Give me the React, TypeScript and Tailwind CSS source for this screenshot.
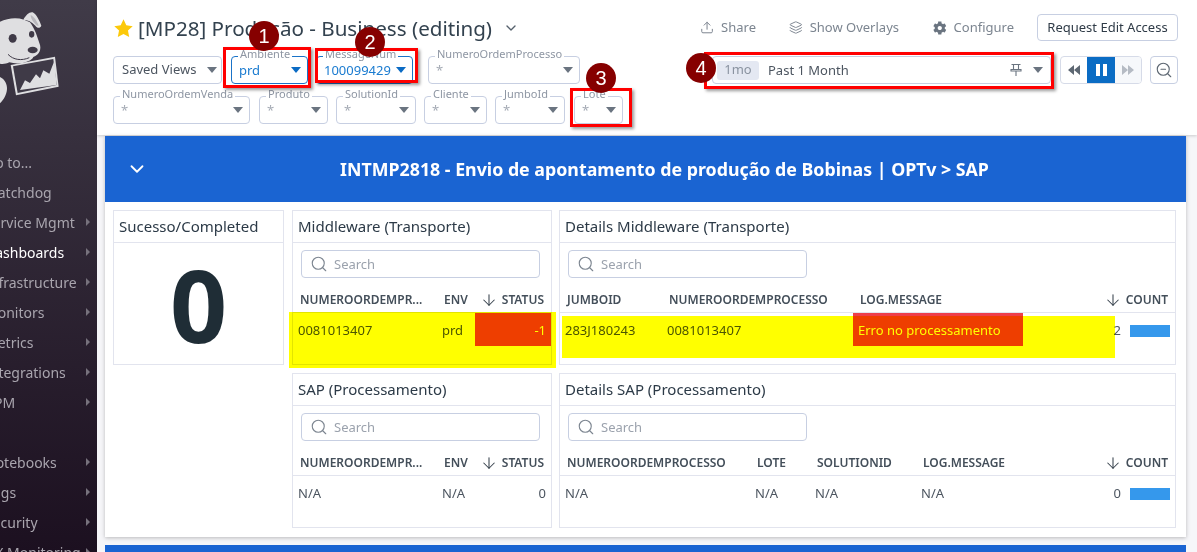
// App.tsx — dashboard editing view with annotated screenshot markers

import { ArrowDown, ChevronDown, Layers, Search, Upload, ZoomOut } from "lucide-react";
import { FaCog } from "react-icons/fa";
import type { ReactNode } from "react";

const NAV_ITEMS = [
  { label: "Go to...", arrow: false },
  { label: "Watchdog", arrow: false },
  { label: "Service Mgmt", arrow: true },
  { label: "Dashboards", arrow: true, active: true },
  { label: "Infrastructure", arrow: true },
  { label: "Monitors", arrow: true },
  { label: "Metrics", arrow: true },
  { label: "Integrations", arrow: true },
  { label: "APM", arrow: true },
  { label: "", arrow: false },
  { label: "Notebooks", arrow: true },
  { label: "Logs", arrow: true },
  { label: "Security", arrow: true },
  { label: "UX Monitoring", arrow: true },
];

function Caret({ className }: { className: string }) {
  return (
    <svg viewBox="0 0 10 6" className={`h-[6px] w-[10px] shrink-0 ${className}`}>
      <path d="M0 0h10L5 6z" fill="currentColor" />
    </svg>
  );
}

function Logo() {
  const light = "#dfdfe1";
  const dark = "#3f3a47";
  return (
    <div className="h-[147px] pt-[5px]">
      <svg viewBox="0 0 210 300" className="h-[100px] w-[70px]">
        <path d="M0 50C22 40 48 36 72 44L90 52C106 74 112 96 118 114C126 132 118 150 100 156C96 168 60 182 28 172C20 176 8 178 0 176Z" fill={light} />
        <path d="M24 148C40 165 65 168 88 158" fill="none" stroke={dark} strokeWidth="3" />
        <path d="M70 44C78 30 88 20 98 22C110 28 120 50 124 62C120 70 112 70 106 62C96 50 82 44 70 44Z" fill={light} />
        <path d="M92 30C102 34 112 50 116 62C110 64 106 56 100 50C94 42 92 36 92 30Z" fill="#b9b8bd" />
        <ellipse cx="38" cy="100" rx="12" ry="13" fill={dark} />
        <ellipse cx="95" cy="88" rx="8" ry="10" fill={dark} />
        <ellipse cx="98" cy="135" rx="15" ry="10" fill={dark} />
        <path d="M32 180L165 155L176 245L48 271Z" fill={light} />
        <path d="M39 184L160 162L170 240L53 264Z" fill={dark} />
        <path d="M60 255L75 226L90 234L108 208L120 220L130 196L148 206L163 168L170 240Z" fill={light} />
        <path d="M0 216C14 222 22 238 21 252C20 270 10 285 0 295Z" fill={light} />
      </svg>
    </div>
  );
}

function Sidebar() {
  return (
    <aside className="h-[552px] w-[97px] shrink-0 overflow-hidden bg-gradient-to-b from-[#403b48] to-[#1c1020]">
      <Logo />
      {NAV_ITEMS.map((item, i) => (
        <div key={i} className="flex h-[30px] items-center justify-between pr-[7px]">
          <span
            className={`-ml-[15px] whitespace-nowrap text-[14px] ${
              item.active ? "text-white" : "text-[#a9a5ae]"
            }`}
          >
            {item.label}
          </span>
          {item.arrow && <span className="h-0 w-0 border-y-[4px] border-l-[4px] border-y-transparent border-l-[#77727d]" />}
        </div>
      ))}
    </aside>
  );
}

interface FilterProps {
  label: string;
  value?: string;
  width: string;
  active?: boolean;
}

function Filter({ label, value = "*", width, active }: FilterProps) {
  return (
    <div
      className={`relative flex h-[28px] items-center justify-between rounded-[4px] border pl-[7px] pr-[6px] ${width} ${
        active ? "border-[#1a73c8]" : "border-[#c7cfe2]"
      }`}
    >
      <span className="absolute -top-[11px] left-[6px] whitespace-nowrap bg-white px-[2px] text-[11px] leading-[16px] text-[#8e96a3]">
        {label}
      </span>
      <span className={`text-[13px] leading-[20px] ${active ? "text-[#1a7bd0]" : "text-[#a5abb5]"}`}>{value}</span>
      <Caret className={active ? "text-[#0b6bc4]" : "text-[#6a7480]"} />
    </div>
  );
}

function ToolbarAction({ icon, label, className }: { icon: ReactNode; label: string; className: string }) {
  return (
    <div className={`flex items-center gap-[7px] whitespace-nowrap text-[13px] text-[#7c8590] ${className}`}>
      {icon}
      <span>{label}</span>
    </div>
  );
}

function TopBar() {
  return (
    <header className="flex h-[135px] bg-white shadow-[0_1px_3px_rgba(0,0,0,0.18)]">
      <div className="w-[560px] pl-[16px]">
        <div className="flex h-[56px] items-center">
          <svg viewBox="0 0 24 24" className="h-[21px] w-[21px] shrink-0">
            <path d="M12 1.5l3.2 6.9 7.3.9-5.4 5.1 1.4 7.4L12 18.2l-6.5 3.6 1.4-7.4L1.5 9.3l7.3-.9z" fill="#fcc90a" />
          </svg>
          <h1 className="ml-[4px] whitespace-nowrap text-[20.6px] text-[#33424f]">[MP28] Produção - Business (editing)</h1>
          <ChevronDown size={16} strokeWidth={2} className="ml-[11px] text-[#56616c]" />
        </div>
        <div className="flex">
          <div className="flex h-[28px] w-[109px] items-center justify-between rounded-[4px] border border-[#c7cfe2] pl-[8px] pr-[4px] text-[13px] text-[#4c5560]">
            <span>Saved Views</span>
            <Caret className="text-[#6a7480]" />
          </div>
          <Filter label="Ambiente" value="prd" width="ml-[9px] w-[77px]" active />
          <Filter label="MessageNum" value="100099429" width="ml-[8px] w-[97px]" active />
          <Filter label="NumeroOrdemProcesso" width="ml-[15px] w-[152px]" />
        </div>
        <div className="mt-[12px] flex">
          <Filter label="NumeroOrdemVenda" width="w-[137px]" />
          <Filter label="Produto" width="ml-[9px] w-[69px]" />
          <Filter label="SolutionId" width="ml-[8px] w-[80px]" />
          <Filter label="Cliente" width="ml-[8px] w-[63px]" />
          <Filter label="JumboId" width="ml-[8px] w-[70px]" />
          <Filter label="Lote" width="ml-[9px] w-[49px]" />
        </div>
      </div>

      <div className="ml-auto mr-[19px] w-[478px] pt-[14px]">
        <div className="flex h-[27px] items-center">
          <ToolbarAction icon={<Upload size={15} strokeWidth={1.7} />} label="Share" className="w-[56px]" />
          <ToolbarAction icon={<Layers size={15} strokeWidth={1.7} />} label="Show Overlays" className="ml-[33px] w-[110px]" />
          <ToolbarAction icon={<FaCog size={14} className="text-[#6a7480]" />} label="Configure" className="ml-[34px] w-[81px]" />
          <button className="ml-[23px] h-[27px] w-[141px] rounded-[4px] border border-[#c7cfe2] text-[13px] text-[#2f3b47]">
            Request Edit Access
          </button>
        </div>
        <div className="mt-[15px] flex">
          <div className="ml-[12px] flex h-[28px] w-[339px] items-center rounded-[4px] border border-[#c7cfe2] pl-[4px] pr-[7px]">
            <span className="flex h-[19px] w-[42px] items-center justify-center rounded-[3px] bg-[#e4e8f2] text-[13px] text-[#8a93a0]">
              1mo
            </span>
            <span className="ml-[9px] mt-[1px] text-[13px] text-[#4c5560]">Past 1 Month</span>
            <svg viewBox="0 0 14 14" fill="none" stroke="#6a7480" strokeWidth="1.1" className="ml-auto h-[14px] w-[14px]">
              <path d="M2.5 1.5h9M4.5 1.5v5M9.5 1.5v5M2 6.5l2.5 0h5l2.5 0v1.5H2zM7 8v5" />
            </svg>
            <Caret className="ml-[10px] text-[#6a7480]" />
          </div>
          <div className="ml-[9px] flex h-[28px] w-[82px] overflow-hidden rounded-[4px] border border-[#d6dbe8]">
            <div className="flex flex-1 items-center justify-center">
              <svg viewBox="0 0 14 12" className="h-[12px] w-[14px]">
                <path d="M7 1v10L1 6zM13 1v10L7 6z" fill="#5d6772" />
              </svg>
            </div>
            <div className="flex w-[28px] items-center justify-center gap-[3px] bg-[#0a6cc4]">
              <span className="h-[12px] w-[4px] bg-white" />
              <span className="h-[12px] w-[4px] bg-white" />
            </div>
            <div className="flex flex-1 items-center justify-center bg-[#f6f8fb]">
              <svg viewBox="0 0 14 12" className="h-[12px] w-[14px]">
                <path d="M1 1v10l6-5zM7 1v10l6-5z" fill="#b5bbc4" />
              </svg>
            </div>
          </div>
          <div className="ml-[8px] flex h-[28px] w-[28px] items-center justify-center rounded-[4px] border border-[#c7cfe2]">
            <ZoomOut size={18} strokeWidth={1.5} className="text-[#5d6772]" />
          </div>
        </div>
      </div>
    </header>
  );
}

function Widget({ title, width, children }: { title: string; width: string; children: ReactNode }) {
  return (
    <section className={`h-[155px] border border-[#e2e4ee] bg-white ${width}`}>
      <h2 className="flex h-[32px] items-center border-b border-[#e2e4ee] pl-[5px] text-[15px] text-[#2c3a47]">{title}</h2>
      {children}
    </section>
  );
}

function SearchBox() {
  return (
    <div className="ml-[8px] mt-[7px] flex h-[28px] w-[239px] items-center rounded-[4px] border border-[#c7cfe2] pl-[8px]">
      <Search size={18} strokeWidth={1.5} className="text-[#7c8590]" />
      <span className="ml-[6px] mt-[1px] text-[13px] text-[#9ba2ad]">Search</span>
    </div>
  );
}

interface Column {
  label: string;
  width: string;
}

function HeaderRow({ columns, sortLabel }: { columns: Column[]; sortLabel: string }) {
  return (
    <div className="mt-[8px] flex h-[27px] items-center border-b border-[#e2e4ee] pt-[2px] text-[12px] font-semibold text-[#444f5a]">
      {columns.map((c) => (
        <div key={c.label} className={`whitespace-nowrap pl-[7px] ${c.width}`}>
          {c.label}
        </div>
      ))}
      <div className="ml-auto flex items-center gap-[4px] pr-[7px]">
        <ArrowDown size={18} strokeWidth={1.4} className="text-[#36414c]" />
        <span>{sortLabel}</span>
      </div>
    </div>
  );
}

function Cell({ width, children }: { width: string; children: ReactNode }) {
  return <div className={`flex h-[33px] items-center pl-[5px] pt-[2px] text-[13px] text-[#4c5560] ${width}`}>{children}</div>;
}

function CountCell({ value }: { value: number }) {
  return (
    <div className="ml-auto flex h-[33px] items-center pr-[5px] pt-[2px]">
      <span className="text-[13px] text-[#4c5560]">{value}</span>
      <span className="ml-[9px] h-[12px] w-[40px] bg-[#3598ec]" />
    </div>
  );
}

function Dashboard() {
  return (
    <main className="ml-[8px] mr-[11px] mt-[1px]">
      <div className="bg-white shadow-[0_1px_4px_rgba(0,0,0,0.25)]">
        <div className="flex h-[66px] items-center bg-[#1a64d2] pl-[21px] text-white">
          <ChevronDown size={22} strokeWidth={2} />
          <div className="mr-[5px] flex-1 text-center text-[17.8px] font-bold">
            INTMP2818 - Envio de apontamento de produção de Bobinas | OPTv &gt; SAP
          </div>
        </div>
        <div className="flex h-[335px] gap-[8px] pl-[8px] pt-[8px]">
          <Widget title="Sucesso/Completed" width="w-[171px]">
            <div className="flex h-[121px] items-center justify-center text-[100px] font-bold leading-none text-[#1f2d36]">0</div>
          </Widget>

          <div className="flex w-[260px] flex-col gap-[8px]">
            <Widget title="Middleware (Transporte)" width="w-[260px]">
              <SearchBox />
              <HeaderRow
                columns={[
                  { label: "NUMEROORDEMPR...", width: "w-[144px]" },
                  { label: "ENV", width: "w-[38px]" },
                ]}
                sortLabel="STATUS"
              />
              <div className="flex">
                <Cell width="w-[144px]">0081013407</Cell>
                <Cell width="w-[38px]">prd</Cell>
                <div className="flex h-[33px] flex-1 items-center justify-end bg-[#ee3e4a] pr-[5px] pt-[2px] text-[13px] text-white">-1</div>
              </div>
            </Widget>
            <Widget title="SAP (Processamento)" width="w-[260px]">
              <SearchBox />
              <HeaderRow
                columns={[
                  { label: "NUMEROORDEMPR...", width: "w-[144px]" },
                  { label: "ENV", width: "w-[38px]" },
                ]}
                sortLabel="STATUS"
              />
              <div className="flex">
                <Cell width="w-[144px]">N/A</Cell>
                <Cell width="w-[38px]">N/A</Cell>
                <div className="flex h-[33px] flex-1 items-center justify-end pr-[5px] pt-[2px] text-[13px] text-[#4c5560]">0</div>
              </div>
            </Widget>
          </div>

          <div className="-ml-px flex w-[617px] flex-col gap-[8px]">
            <Widget title="Details Middleware (Transporte)" width="w-[617px]">
              <SearchBox />
              <HeaderRow
                columns={[
                  { label: "JUMBOID", width: "w-[102px]" },
                  { label: "NUMEROORDEMPROCESSO", width: "w-[191px]" },
                  { label: "LOG.MESSAGE", width: "w-[170px]" },
                ]}
                sortLabel="COUNT"
              />
              <div className="flex">
                <Cell width="w-[102px]">283J180243</Cell>
                <Cell width="w-[191px]">0081013407</Cell>
                <div className="flex h-[33px] w-[170px] items-center bg-[#ee3e4a] pl-[5px] pt-[2px] text-[13px] text-white">
                  Erro no processamento
                </div>
                <CountCell value={2} />
              </div>
            </Widget>
            <Widget title="Details SAP (Processamento)" width="w-[617px]">
              <SearchBox />
              <HeaderRow
                columns={[
                  { label: "NUMEROORDEMPROCESSO", width: "w-[190px]" },
                  { label: "LOTE", width: "w-[60px]" },
                  { label: "SOLUTIONID", width: "w-[106px]" },
                  { label: "LOG.MESSAGE", width: "w-[120px]" },
                ]}
                sortLabel="COUNT"
              />
              <div className="flex">
                <Cell width="w-[190px]">N/A</Cell>
                <Cell width="w-[60px]">N/A</Cell>
                <Cell width="w-[106px]">N/A</Cell>
                <Cell width="w-[120px]">N/A</Cell>
                <CountCell value={0} />
              </div>
            </Widget>
          </div>
        </div>
      </div>
      <div className="mt-[8px] h-[20px] bg-[#1a64d2]" />
    </main>
  );
}

// Hand-drawn review markers that sit on top of the screenshot
function Marker({ n, className }: { n: number; className: string }) {
  return (
    <div
      className={`absolute flex h-[30px] w-[30px] items-center justify-center rounded-full bg-[#860000] text-[20px] text-white [font-family:'Liberation_Sans',sans-serif] ${className}`}
    >
      {n}
    </div>
  );
}

function RedBox({ className }: { className: string }) {
  return <div className={`absolute border-[3px] border-[#ff0000] shadow-[2px_2px_3px_rgba(0,0,0,0.4)] ${className}`} />;
}

function Highlight({ className }: { className: string }) {
  return <div className={`absolute bg-[#ffff00] mix-blend-multiply ${className}`} />;
}

export default function App() {
  return (
    <div className="relative flex h-[552px] w-[1197px] overflow-hidden bg-[#f6f6f9] [font-family:'Noto_Sans',sans-serif]">
      <Sidebar />
      <div className="min-w-0 flex-1">
        <TopBar />
        <Dashboard />
      </div>

      <Highlight className="left-[289px] top-[312px] h-[56px] w-[267px]" />
      <Highlight className="left-[562px] top-[316px] h-[42px] w-[553px]" />

      <RedBox className="left-[223px] top-[47px] h-[41px] w-[88px]" />
      <RedBox className="left-[315px] top-[48px] h-[35px] w-[103px]" />
      <RedBox className="left-[570px] top-[88px] h-[39px] w-[62px]" />
      <RedBox className="left-[704px] top-[52px] h-[37px] w-[350px]" />

      <Marker n={1} className="left-[249px] top-[21px]" />
      <Marker n={2} className="left-[355px] top-[27px]" />
      <Marker n={3} className="left-[586px] top-[63px]" />
      <Marker n={4} className="left-[686px] top-[53px]" />
    </div>
  );
}
